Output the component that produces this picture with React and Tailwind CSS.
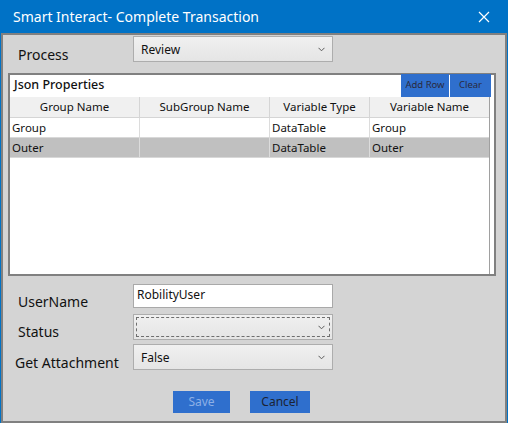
import React from "react";

const F = { fontFamily: '"Noto Sans", "Open Sans", sans-serif' };

function Chevron() {
  return (
    <svg width="7" height="5" viewBox="0 0 7 5" className="shrink-0">
      <path d="M0.5 0.8 L3.5 3.8 L6.5 0.8" fill="none" stroke="#5a5a5a" strokeWidth="1" />
    </svg>
  );
}

function Select({ value, focus }) {
  return (
    <div className="w-[200px] h-[26px] border border-[#adadad] bg-gradient-to-b from-[#f0f0f0] to-[#e5e5e5] p-[2px]">
      <div
        className={
          "h-full flex items-start justify-between pl-[4px] pr-[4px] " +
          (focus ? "border border-dashed border-[#6e6e6e]" : "border border-transparent")
        }
      >
        <span className="text-[12px] leading-[16px] text-[#111] pt-[2px]">{value}</span>
        <span className="pt-[7px]">
          <Chevron />
        </span>
      </div>
    </div>
  );
}

export default function App() {
  const rows = [
    ["Group", "", "DataTable", "Group", false],
    ["Outer", "", "DataTable", "Outer", true],
  ];
  return (
    <div className="w-[508px] h-[423px] bg-[#0072c6] flex flex-col px-px overflow-hidden" style={F}>
      <div className="h-[33px] shrink-0 flex items-center justify-between pl-[12px] pr-[17px]">
        <span className="text-white text-[14px] leading-none">Smart Interact- Complete Transaction</span>
        <svg width="12" height="12" viewBox="0 0 12 12">
          <path d="M1 1 L11 11 M11 1 L1 11" stroke="white" strokeWidth="1.2" />
        </svg>
      </div>
      <div className="flex-1 border-2 border-[#808080] bg-[#d4d4d4] flex flex-col">
        {/* Process row */}
        <div className="flex items-start h-[26px] mt-[1px]">
          <div className="w-[130px] pl-[15px] pt-[9px] text-[14px] leading-[20px] text-[#111]">Process</div>
          <Select value="Review" />
        </div>

        {/* Json panel */}
        <div className="ml-[5px] mt-[11px] w-[488px] h-[203px] border-2 border-[#808080] bg-white flex flex-col">
          <div className="h-[22px] flex shrink-0">
            <div className="flex-1 pl-[4px] pt-[2px] text-[12.5px] leading-[16px] font-medium text-[#111]">Json Properties</div>
            <div className="flex mr-[3px] mt-[-1px]">
              <div className="w-[48px] h-[23px] bg-[#2f6fcd] text-[#2a2a40] text-[9.5px] flex items-center justify-center">Add Row</div>
              <div className="w-px" />
              <div className="w-[41px] h-[23px] bg-[#2f6fcd] text-[#2a2a40] text-[9.5px] flex items-center justify-center">Clear</div>
            </div>
          </div>
          <div className="flex-1 flex">
            <div className="w-[480px] border-r border-[#a0a0a0] flex flex-col">
              <div className="flex h-[21px] bg-[#f0f0f0] border-b border-[#d5d5d5] text-[11.5px] text-[#111]">
                <div className="w-[130px] border-r border-[#d5d5d5] flex items-center justify-center">Group Name</div>
                <div className="w-[130px] border-r border-[#d5d5d5] flex items-center justify-center">SubGroup Name</div>
                <div className="w-[100px] border-r border-[#d5d5d5] flex items-center justify-center">Variable Type</div>
                <div className="flex-1 flex items-center justify-center">Variable Name</div>
              </div>
              {rows.map((r, i) => (
                <div
                  key={i}
                  className={
                    "flex h-[20px] text-[11.5px] text-[#111] border-b border-[#d8d8d8] " +
                    (r[4] ? "bg-[#c0c0c0]" : "bg-white")
                  }
                >
                  <div className="w-[130px] border-r border-[#dcdcdc] flex items-center pl-[2px]">{r[0]}</div>
                  <div className="w-[130px] border-r border-[#dcdcdc] flex items-center pl-[2px]">{r[1]}</div>
                  <div className="w-[100px] border-r border-[#dcdcdc] flex items-center pl-[2px]">{r[2]}</div>
                  <div className="flex-1 flex items-center pl-[2px]">{r[3]}</div>
                </div>
              ))}
            </div>
          </div>
        </div>

        {/* Form rows */}
        <div className="flex items-start h-[24px] mt-[8px]">
          <div className="w-[130px] pl-[15px] pt-[8px] text-[14px] leading-[20px] text-[#111]">UserName</div>
          <div className="w-[200px] h-[24px] border border-[#a9a9a9] bg-white pl-[3px] text-[12px] leading-[16px] pt-[2px] text-[#111]">
            RobilityUser
          </div>
        </div>
        <div className="flex items-start h-[26px] mt-[6px]">
          <div className="w-[130px] pl-[15px] pt-[8px] text-[14px] leading-[20px] text-[#111]">Status</div>
          <Select value="" focus />
        </div>
        <div className="flex items-start h-[26px] mt-[4px]">
          <div className="w-[130px] pl-[12px] pt-[9px] text-[14px] leading-[20px] text-[#111] whitespace-nowrap">Get Attachment</div>
          <Select value="False" />
        </div>

        <div className="flex mt-[21px] pl-[170px] gap-[20px]">
          <div className="w-[57px] h-[22px] bg-[#2f6fcd] text-[#8db0e6] text-[12px] flex items-center justify-center">Save</div>
          <div className="w-[60px] h-[22px] bg-[#2f6fcd] text-[#1c2333] text-[12px] flex items-center justify-center">Cancel</div>
        </div>
      </div>
    </div>
  );
}
